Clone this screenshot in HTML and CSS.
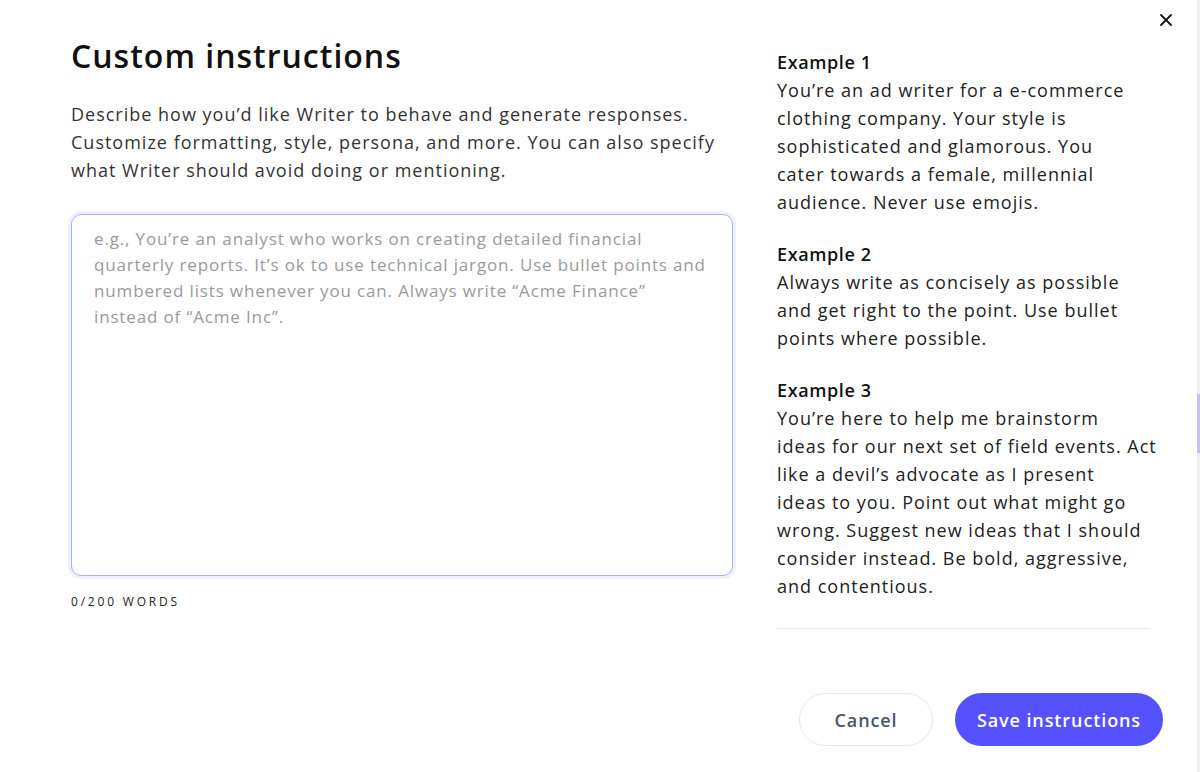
FILE: index.html
```html
<!DOCTYPE html>
<html lang="en">
  <head>
    <meta charset="UTF-8" />
    <meta name="viewport" content="width=device-width, initial-scale=1.0" />
    <title>Custom instructions</title>
    <link rel="stylesheet" href="styles.css">
  </head>
  <body>
    <div class="modal">
      <!-- Close button -->
      <button type="button" class="close-button" aria-label="Close">
        <svg width="12" height="12" viewBox="0 0 12 12">
          <path d="M1 1 L11 11 M11 1 L1 11" stroke="#111" stroke-width="1.8" stroke-linecap="round" />
        </svg>
      </button>

      <div class="modal-body">
        <!-- Left: the instructions form -->
        <div class="editor">
          <h1 class="title">Custom instructions</h1>
          <p class="description">
            Describe how you’d like Writer to behave and generate responses.
            Customize formatting, style, persona, and more. You can also specify
            what Writer should avoid doing or mentioning.
          </p>
          <textarea
            class="instructions-input"
            placeholder="e.g., You’re an analyst who works on creating detailed financial quarterly reports. It’s ok to use technical jargon. Use bullet points and numbered lists whenever you can. Always write “Acme Finance” instead of “Acme Inc”."
          ></textarea>
          <div class="word-count">0/200 words</div>
        </div>

        <!-- Right: examples (lines kept as in the design) -->
        <div class="examples">
          <div class="example">
            <h3 class="example-title">Example 1</h3>
            <p class="example-text">
              You’re an ad writer for a e-commerce<br />
              clothing company. Your style is<br />
              sophisticated and glamorous. You<br />
              cater towards a female, millennial<br />
              audience. Never use emojis.
            </p>
          </div>
          <div class="example">
            <h3 class="example-title">Example 2</h3>
            <p class="example-text">
              Always write as concisely as possible<br />
              and get right to the point. Use bullet<br />
              points where possible.
            </p>
          </div>
          <div class="example">
            <h3 class="example-title">Example 3</h3>
            <p class="example-text">
              You’re here to help me brainstorm<br />
              ideas for our next set of field events. Act<br />
              like a devil’s advocate as I present<br />
              ideas to you. Point out what might go<br />
              wrong. Suggest new ideas that I should<br />
              consider instead. Be bold, aggressive,<br />
              and contentious.
            </p>
          </div>
          <hr class="divider" />
        </div>
      </div>

      <!-- Footer actions -->
      <div class="modal-footer">
        <button type="button" class="btn btn-cancel">Cancel</button>
        <button type="button" class="btn btn-save">Save instructions</button>
      </div>
    </div>

    <!-- Scrollbar track on the right edge -->
    <div class="scroll-track"><div class="scroll-thumb"></div></div>
  </body>
</html>
```

FILE: styles.css
```css
* {
  box-sizing: border-box;
}
body {
  margin: 0;
  font-family: "Open Sans", sans-serif;
  color: #222;
  background-color: #fff;
}
.modal {
  position: relative;
  padding: 36px 37px 26px 71px;
}
.close-button {
  position: absolute;
  top: 14px;
  right: 28px;
  width: 12px;
  height: 12px;
  padding: 0;
  border: none;
  background: none;
  cursor: pointer;
}
.close-button svg {
  display: block;
}
.modal-body {
  display: grid;
  grid-template-columns: 662px 373px;
  column-gap: 44px;
  align-items: start;
}
.title {
  margin: 0;
  font-size: 32px;
  line-height: 40px;
  font-weight: 600;
  letter-spacing: 1px;
  color: #111;
}
.description {
  margin: 24px 0 0;
  font-size: 18px;
  line-height: 28px;
  letter-spacing: 1px;
  color: #333;
}
.instructions-input {
  display: block;
  width: 100%;
  height: 362px;
  margin-top: 30px;
  padding: 11px 22px;
  border: 1px solid #a9b1fb;
  border-radius: 10px;
  box-shadow: 0 0 0 3px #eef0ff;
  font-family: inherit;
  font-size: 17px;
  line-height: 26px;
  letter-spacing: 0.85px;
  color: #222;
  resize: none;
  outline: none;
}
.instructions-input::placeholder {
  color: #9a9a9a;
}
.word-count {
  margin-top: 18px;
  font-size: 12px;
  line-height: 16px;
  font-weight: 500;
  letter-spacing: 2.8px;
  text-transform: uppercase;
  color: #222;
}
.examples {
  padding-top: 12px;
}
.example + .example {
  margin-top: 24px;
}
.example-title {
  margin: 0;
  font-size: 18px;
  line-height: 28px;
  font-weight: 600;
  letter-spacing: 0.6px;
  color: #111;
}
.example-text {
  margin: 0;
  font-size: 18px;
  line-height: 28px;
  letter-spacing: 1px;
  white-space: nowrap;
  color: #222;
}
.divider {
  margin: 28px 0 0;
  border: none;
  border-top: 1px solid #e8e8ee;
}
.modal-footer {
  display: flex;
  justify-content: flex-end;
  gap: 22px;
  margin-top: 64px;
}
.btn {
  height: 53px;
  border-radius: 27px;
  font-family: inherit;
  font-size: 18px;
  font-weight: 600;
  letter-spacing: 0.9px;
  cursor: pointer;
}
.btn-cancel {
  width: 134px;
  border: 1px solid #e6e8ec;
  background-color: #fff;
  color: #4a5568;
}
.btn-save {
  width: 208px;
  border: none;
  background-color: #5551ff;
  color: #fff;
}
.scroll-track {
  position: fixed;
  top: 0;
  right: 0;
  bottom: 0;
  width: 3px;
  background-color: #eceef2;
}
.scroll-thumb {
  margin-top: 394px;
  height: 59px;
  background-color: #c2c2f9;
}
```
